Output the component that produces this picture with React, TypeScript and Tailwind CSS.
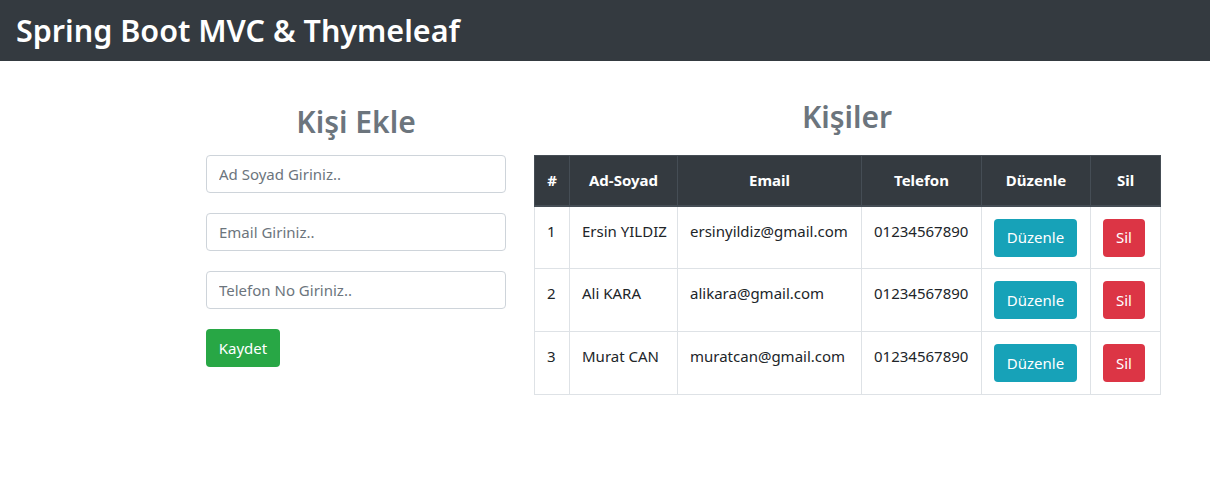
import React from "react";

interface Person {
  id: number;
  name: string;
  email: string;
  phone: string;
}

const people: Person[] = [
  { id: 1, name: "Ersin YILDIZ", email: "ersinyildiz@gmail.com", phone: "01234567890" },
  { id: 2, name: "Ali KARA", email: "alikara@gmail.com", phone: "01234567890" },
  { id: 3, name: "Murat CAN", email: "muratcan@gmail.com", phone: "01234567890" },
];

const font = { fontFamily: '"Noto Sans", "Open Sans", sans-serif' };

const App: React.FC = () => {
  return (
    <div className="min-h-[479px] bg-white text-[#212529]" style={font}>
      <nav className="h-[61px] bg-[#343a40] flex items-center px-4">
        <h1 className="text-[30.5px] font-semibold text-white leading-none">
          Spring Boot MVC &amp; Thymeleaf
        </h1>
      </nav>

      <div className="w-[1140px] mx-auto px-[15px] flex">
        <div className="ml-[156px] w-[300px] pt-[42px]">
          <h2 className="text-[30px] font-semibold text-[#6c757d] text-center leading-[38px] mb-[14px]">
            Kişi Ekle
          </h2>
          <form className="flex flex-col gap-5">
            <input
              type="text"
              placeholder="Ad Soyad Giriniz.."
              className="h-[38px] w-full px-3 text-[15px] border border-[#ced4da] rounded placeholder:text-[#6c757d] outline-none"
            />
            <input
              type="text"
              placeholder="Email Giriniz.."
              className="h-[38px] w-full px-3 text-[15px] border border-[#ced4da] rounded placeholder:text-[#6c757d] outline-none"
            />
            <input
              type="text"
              placeholder="Telefon No Giriniz.."
              className="h-[38px] w-full px-3 text-[15px] border border-[#ced4da] rounded placeholder:text-[#6c757d] outline-none"
            />
            <div>
              <button
                type="button"
                className="h-[38px] w-[74px] bg-[#28a745] text-white text-[15px] rounded"
              >
                Kaydet
              </button>
            </div>
          </form>
        </div>

        <div className="ml-[28px] w-[626px] pt-[37px]">
          <h2 className="text-[30px] font-semibold text-[#6c757d] text-center leading-[38px] mb-[19px]">
            Kişiler
          </h2>
          <table className="w-[626px] border-collapse table-fixed text-[15px]">
            <thead>
              <tr className="bg-[#343a40] text-white">
                <th className="w-[35px] h-[50px] border border-[#454d55] border-b-2 font-bold">#</th>
                <th className="w-[108px] border border-[#454d55] border-b-2 font-bold">Ad-Soyad</th>
                <th className="w-[184px] border border-[#454d55] border-b-2 font-bold">Email</th>
                <th className="w-[120px] border border-[#454d55] border-b-2 font-bold">Telefon</th>
                <th className="w-[109px] border border-[#454d55] border-b-2 font-bold">Düzenle</th>
                <th className="w-[70px] border border-[#454d55] border-b-2 font-bold">Sil</th>
              </tr>
            </thead>
            <tbody>
              {people.map((p) => (
                <tr key={p.id} className="h-[63px]">
                  <td className="border border-[#dee2e6] px-3 pt-[12px] align-top leading-6">{p.id}</td>
                  <td className="border border-[#dee2e6] px-3 pt-[12px] align-top leading-6 whitespace-nowrap">{p.name}</td>
                  <td className="border border-[#dee2e6] px-3 pt-[12px] align-top leading-6 whitespace-nowrap">{p.email}</td>
                  <td className="border border-[#dee2e6] px-3 pt-[12px] align-top leading-6">{p.phone}</td>
                  <td className="border border-[#dee2e6] px-3 pt-[12px] align-top">
                    <button type="button" className="h-[38px] w-[83px] bg-[#17a2b8] text-white rounded">
                      Düzenle
                    </button>
                  </td>
                  <td className="border border-[#dee2e6] px-3 pt-[12px] align-top">
                    <button type="button" className="h-[38px] w-[42px] bg-[#dc3545] text-white rounded">
                      Sil
                    </button>
                  </td>
                </tr>
              ))}
            </tbody>
          </table>
        </div>
      </div>
    </div>
  );
};

export default App;
